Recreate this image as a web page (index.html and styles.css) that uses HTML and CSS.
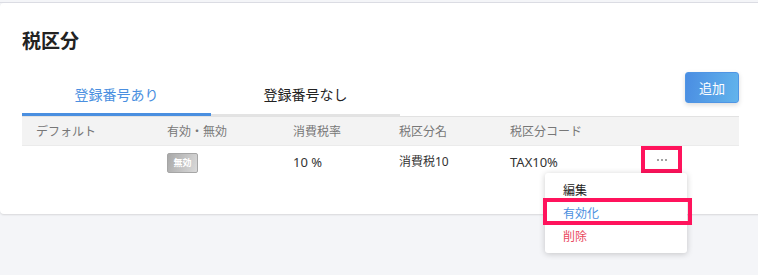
FILE: index.html
```html
<!DOCTYPE html>
<html lang="ja">
<head>
<meta charset="utf-8">
<title>税区分</title>
<link rel="stylesheet" href="styles.css">
</head>
<body>
<div class="topbar"></div>
<section class="card">
  <h1 class="title">税区分</h1>
  <div class="toolbar">
    <div class="tabs">
      <div class="tab active">登録番号あり</div>
      <div class="tab">登録番号なし</div>
    </div>
    <button class="add-btn">追加</button>
  </div>
  <div class="table">
    <div class="thead">
      <div>デフォルト</div>
      <div>有効・無効</div>
      <div>消費税率</div>
      <div>税区分名</div>
      <div>税区分コード</div>
      <div></div>
    </div>
    <div class="trow">
      <div></div>
      <div><span class="badge">無効</span></div>
      <div class="latin">10 %</div>
      <div>消費税10</div>
      <div class="latin">TAX10%</div>
      <div class="action-cell">
        <button class="dots" aria-label="メニュー"><i></i><i></i><i></i></button>
        <span class="mark mark-dots"></span>
        <div class="menu">
          <div class="menu-item">編集</div>
          <div class="menu-item enable">有効化</div>
          <div class="menu-item delete">削除</div>
          <span class="mark mark-item"></span>
        </div>
      </div>
    </div>
  </div>
</section>
</body>
</html>
```

FILE: styles.css
```css
* { box-sizing: border-box; }
html, body { margin: 0; padding: 0; }
body {
  background: #f4f5f8;
  font-family: "Noto Sans", "Noto Sans CJK JP", sans-serif;
  color: #333;
  width: 758px;
  height: 275px;
  overflow: hidden;
}
.topbar {
  height: 3px;
  border-bottom: 1px solid #dcdde4;
}
.card {
  background: #fff;
  border-radius: 4px;
  margin-right: -6px;
  height: 211px;
  padding: 25px 25px 0 22px;
  box-shadow: 0 1px 2px rgba(0,0,0,0.12);
  position: relative;
}
.title {
  margin: 0;
  font-size: 19px;
  line-height: 26px;
  font-weight: 700;
  color: #222;
}
.toolbar {
  margin-top: 18px;
  display: flex;
  align-items: flex-end;
  justify-content: space-between;
}
.tabs { display: flex; }
.tab {
  width: 189px;
  height: 40px;
  padding-bottom: 2px;
  display: flex;
  align-items: center;
  justify-content: center;
  font-size: 14px;
  color: #222;
  border-bottom: 2px solid #e3e3e3;
}
.tab.active {
  color: #4a8fe0;
  border-bottom: 3px solid #4a8fe0;
  padding-bottom: 1px;
}
.add-btn {
  width: 54px;
  height: 31px;
  margin-bottom: 13px;
  border: 1px solid #4f95e4;
  border-radius: 3px;
  background: linear-gradient(100deg, #4a8de2, #62b4ec);
  color: #fff;
  font-family: inherit;
  font-size: 13px;
  box-shadow: 0 2px 5px rgba(0,0,0,0.14);
  padding: 0;
}
.thead, .trow {
  display: grid;
  grid-template-columns: 131px 126px 106px 111px 120px 1fr;
  padding-left: 14px;
}
.thead {
  height: 30px;
  align-items: center;
  background: #f3f3f3;
  border-top: 1px solid #e2e2e2;
  border-bottom: 1px solid #ebebeb;
  font-size: 12px;
  color: #777;
}
.trow {
  padding-top: 7px;
  font-size: 12px;
  line-height: 16px;
  color: #333;
  align-items: start;
}
.trow > div { padding-top: 1px; }
.trow > .latin { font-size: 13px; }
.badge {
  display: inline-block;
  width: 31px;
  height: 20px;
  margin-top: -1px;
  border: 1px solid #a6a6a6;
  border-radius: 2px;
  background: linear-gradient(110deg, #a9a9a9, #dadada);
  color: #fff;
  font-size: 9px;
  line-height: 18px;
  text-align: center;
  font-weight: 700;
}
.action-cell {
  position: relative;
  padding-left: 15px;
}
.dots {
  width: 33px;
  height: 19px;
  margin-top: -4px;
  border: 0;
  background: transparent;
  display: flex;
  align-items: center;
  justify-content: center;
  gap: 2px;
  padding: 0;
}
.dots i {
  display: block;
  width: 2px;
  height: 2px;
  background: #a2a2a2;
}
.mark {
  position: absolute;
  border: 4px solid #ff135c;
  pointer-events: none;
}
.mark-dots {
  left: 11px;
  top: -7px;
  width: 41px;
  height: 27px;
}
.menu {
  position: absolute;
  left: -85px;
  top: 20px;
  width: 142px;
  height: 80px;
  padding: 6px 0 5px;
  background: #fff;
  border-radius: 3px;
  box-shadow: 0 1px 6px rgba(0,0,0,0.2);
  z-index: 5;
}
.menu-item {
  height: 23px;
  line-height: 23px;
  padding-left: 18px;
  font-size: 12px;
  color: #222;
}
.menu-item.enable { color: #4a8fe0; }
.menu-item.delete { color: #e9485e; }
.mark-item {
  left: -2px;
  top: 25px;
  width: 149px;
  height: 27px;
}
```
